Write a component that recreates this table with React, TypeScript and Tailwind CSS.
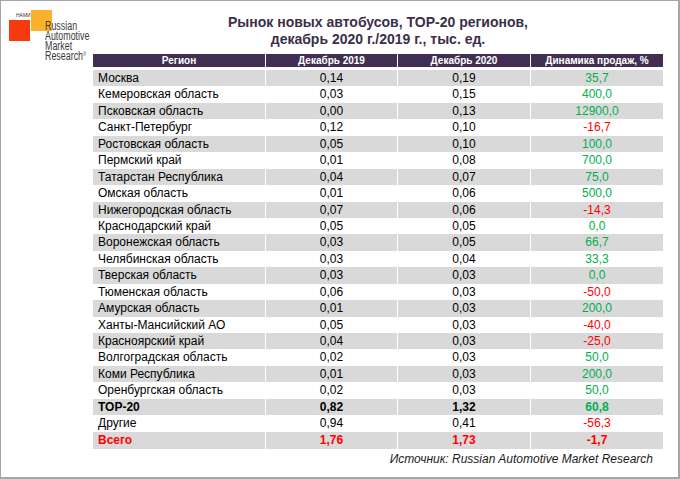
import React from "react";

type Row = {
  region: string;
  y2019: string;
  y2020: string;
  change: string;
  bold?: boolean;
  total?: boolean;
};

const ROWS: Row[] = [
  { region: "Москва", y2019: "0,14", y2020: "0,19", change: "35,7" },
  { region: "Кемеровская область", y2019: "0,03", y2020: "0,15", change: "400,0" },
  { region: "Псковская область", y2019: "0,00", y2020: "0,13", change: "12900,0" },
  { region: "Санкт-Петербург", y2019: "0,12", y2020: "0,10", change: "-16,7" },
  { region: "Ростовская область", y2019: "0,05", y2020: "0,10", change: "100,0" },
  { region: "Пермский край", y2019: "0,01", y2020: "0,08", change: "700,0" },
  { region: "Татарстан Республика", y2019: "0,04", y2020: "0,07", change: "75,0" },
  { region: "Омская область", y2019: "0,01", y2020: "0,06", change: "500,0" },
  { region: "Нижегородская область", y2019: "0,07", y2020: "0,06", change: "-14,3" },
  { region: "Краснодарский край", y2019: "0,05", y2020: "0,05", change: "0,0" },
  { region: "Воронежская область", y2019: "0,03", y2020: "0,05", change: "66,7" },
  { region: "Челябинская область", y2019: "0,03", y2020: "0,04", change: "33,3" },
  { region: "Тверская область", y2019: "0,03", y2020: "0,03", change: "0,0" },
  { region: "Тюменская область", y2019: "0,06", y2020: "0,03", change: "-50,0" },
  { region: "Амурская область", y2019: "0,01", y2020: "0,03", change: "200,0" },
  { region: "Ханты-Мансийский АО", y2019: "0,05", y2020: "0,03", change: "-40,0" },
  { region: "Красноярский край", y2019: "0,04", y2020: "0,03", change: "-25,0" },
  { region: "Волгоградская область", y2019: "0,02", y2020: "0,03", change: "50,0" },
  { region: "Коми Республика", y2019: "0,01", y2020: "0,03", change: "200,0" },
  { region: "Оренбургская область", y2019: "0,02", y2020: "0,03", change: "50,0" },
  { region: "TOP-20", y2019: "0,82", y2020: "1,32", change: "60,8", bold: true },
  { region: "Другие", y2019: "0,94", y2020: "0,41", change: "-56,3" },
  { region: "Всего", y2019: "1,76", y2020: "1,73", change: "-1,7", bold: true, total: true },
];

function Logo() {
  return (
    <div className="relative w-[84px] h-[52px] ml-[8px] mt-[9px] shrink-0">
      {/* squares */}
      <div className="absolute left-[22px] top-0 w-[21px] h-[21px] bg-[#fbb12c]" />
      <div className="absolute left-0 top-[10px] w-[21px] h-[21px] bg-[#f7390f]" />
      <div className="absolute left-[7px] top-[3px] text-[5px] leading-[5px] text-[#333]">НАМИ</div>
      <div className="absolute left-[36px] top-[11px] origin-left scale-x-[0.74] text-[12px] leading-[10px] text-[#3a3a3a] whitespace-nowrap">
        <div className="h-[10px]">Russian</div>
        <div className="h-[10px]">Automotive</div>
        <div className="h-[10px]">Market</div>
        <div className="h-[10px]">
          Research<span className="text-[6px] align-top leading-[6px]">®</span>
        </div>
      </div>
    </div>
  );
}

export default function App() {
  return (
    <div className="w-[680px] h-[479px] bg-white border border-[#a6a6a6] border-r-2 border-b-2 flex flex-col [font-family:'Liberation_Sans',Arial,sans-serif] text-black overflow-hidden">
      <div className="flex h-[51px]">
        <Logo />
        <div className="flex-1 pt-[13px] pr-[15px] text-center text-[14px] leading-[17px] font-bold text-[#3b2f48]">
          <div>Рынок новых автобусов, TOP-20 регионов,</div>
          <div>декабрь 2020 г./2019 г., тыс. ед.</div>
        </div>
      </div>

      <div className="ml-[92px] mt-[2px] w-[571px] flex flex-col">
        {/* header */}
        <div className="grid grid-cols-[172px_131px_132px_132px] gap-x-px h-[13px] text-[10px] leading-[13px] font-bold text-white">
          <div className="bg-[#402f52] text-center">Регион</div>
          <div className="bg-[#402f52] text-center">Декабрь 2019</div>
          <div className="bg-[#402f52] text-center">Декабрь 2020</div>
          <div className="bg-[#402f52] text-center">Динамика продаж, %</div>
        </div>

        <div className="mt-[3px] flex flex-col">
          {ROWS.map((r, i) => {
            const shaded = i % 2 === 0;
            const cell = shaded ? "bg-[#d9d9d9]" : "bg-white";
            const textCls = r.total ? "text-[#ff0000]" : "text-black";
            const neg = r.change.startsWith("-");
            const changeCls = r.total || neg ? "text-[#ff0000]" : "text-[#00b050]";
            return (
              <div
                key={r.region}
                className={`grid grid-cols-[172px_131px_132px_132px] gap-x-px h-[16.45px] text-[12px] leading-[17px] ${
                  r.bold ? "font-bold" : ""
                }`}
              >
                <div className={`${cell} ${textCls} pl-[5px]`}>{r.region}</div>
                <div className={`${cell} ${textCls} text-center`}>{r.y2019}</div>
                <div className={`${cell} ${textCls} text-center`}>{r.y2020}</div>
                <div className={`${cell} ${changeCls} text-center`}>{r.change}</div>
              </div>
            );
          })}
        </div>

        <div className="mt-[4px] text-right pr-[11px] text-[12px] leading-[14px] italic text-[#1a1a1a]">
          Источник: Russian Automotive Market Research
        </div>
      </div>
    </div>
  );
}
